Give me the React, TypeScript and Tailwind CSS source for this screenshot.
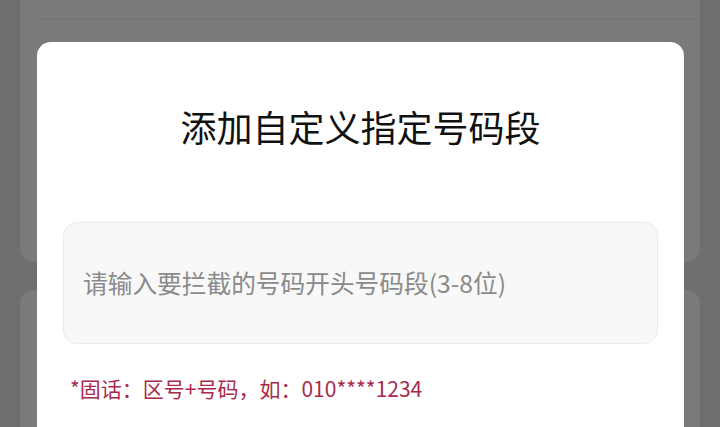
import React from "react";

export default function App() {
  const font = { fontFamily: '"Noto Sans CJK SC", "Noto Sans", sans-serif' };
  return (
    <div className="relative w-[720px] h-[427px] overflow-hidden bg-[#6e6e6e]" style={font}>
      <div className="flex flex-col h-full px-[20px] gap-[28px]">
        <div className="h-[262px] shrink-0 rounded-b-[14px] bg-[#7a7a7a] pt-[18px] pl-[17px]">
          <div className="h-[2px] bg-[#757575]" />
        </div>
        <div className="flex-1 rounded-t-[14px] bg-[#7a7a7a]" />
      </div>

      <div className="absolute left-[37px] top-[42px] w-[647px] h-[420px] rounded-[14px] bg-white flex flex-col">
        <div className="pt-[60px] text-center text-[36px] leading-[48px] text-[#111111]">
          添加自定义指定号码段
        </div>
        <div className="mx-[26px] mt-[72px] h-[122px] rounded-[14px] border border-[#ebebeb] bg-[#f8f8f8] flex items-center pl-[19px]">
          <span className="text-[24.7px] text-[#8a8a8a]">请输入要拦截的号码开头号码段(3-8位)</span>
        </div>
        <div className="mt-[29px] pl-[33px] text-[21px] leading-[30px] text-[#a82a4c]">
          *固话：区号+号码，如：010****1234
        </div>
      </div>
    </div>
  );
}
